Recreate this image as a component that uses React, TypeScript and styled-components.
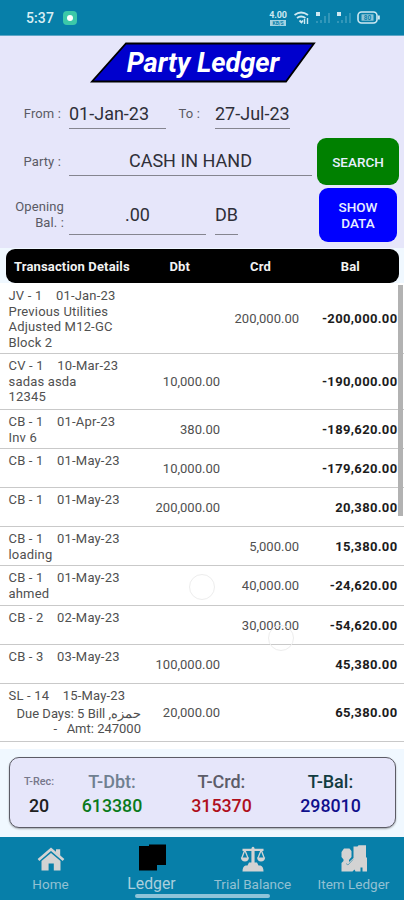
import React from "react";
import styled, { createGlobalStyle } from "styled-components";

const Global = createGlobalStyle`
  * { box-sizing: border-box; }
  body { margin: 0; font-family: Roboto, "Noto Sans", sans-serif; background: #e6e6fa; }
`;

const Screen = styled.div`
  width: 404px; height: 900px; display: flex; flex-direction: column;
  background: #f0f8ff; overflow: hidden;
`;

const StatusBar = styled.header`
  height: 36px; flex: none; background: #077fa9; color: #d9eef4;
  border-bottom: 1px solid #5ea6c6;
  display: flex; align-items: center; padding: 1px 24px 0 26px;
`;
const Clock = styled.span`font-size: 14px; font-weight: 500; letter-spacing: 0.1px; width: 37px;`;
const Recording = styled.span`
  width: 14px; height: 14px; border-radius: 4px; background: #3cc8a8;
  display: grid; place-items: center; margin-right: auto;
  &::after { content: ""; width: 6px; height: 6px; border-radius: 50%; background: #fff; }
`;
const Speed = styled.div`
  width: 20px; margin-right: 6px; display: flex; flex-direction: column; align-items: center;
  font-size: 9px; line-height: 9px; font-weight: 700; letter-spacing: -0.1px; color: #cfe9f2;
`;
const SpeedUnit = styled.span`
  width: 16px; height: 6px; font-size: 5px; line-height: 6px; text-align: center;
  color: #077fa9; background: #a5d3e2;
`;
const Gap = styled.span<{ $w: number }>`width: ${p => p.$w}px; flex: none;`;

const Form = styled.section`
  flex: none; height: 212px; background: #e6e6fa; display: flex; flex-direction: column;
`;
const Title = styled.h1`
  margin: 5px 0 0 89px; width: 228px; height: 43px; display: grid; flex: none;
  & > * { grid-area: 1 / 1; }
`;
const TitleText = styled.span`
  place-self: center; color: #fff; font-size: 27.3px; line-height: 30px; font-weight: 700;
  font-style: italic; letter-spacing: -0.05px; white-space: nowrap;
`;
const FormRow = styled.div<{ $h: number }>`
  display: flex; height: ${p => p.$h}px; flex: none; align-items: flex-end;
`;
const Label = styled.label<{ $w: number; $b: number; $r?: number }>`
  width: ${p => p.$w}px; padding-right: ${p => p.$r ?? 8}px; margin-bottom: ${p => p.$b}px;
  text-align: right; font-size: 13px; line-height: 16px; color: #5a5a64; flex: none; white-space: pre-line;
  letter-spacing: 0.12px;
`;
const Field = styled.div<{ $w: number; $pad: number; $center?: boolean; $b?: number }>`
  width: ${p => p.$w}px; flex: none; border-bottom: 1px solid #85858f; color: #2f2f38;
  padding-bottom: ${p => p.$pad}px; margin-bottom: ${p => p.$b ?? 0}px;
  text-align: ${p => (p.$center ? "center" : "left")};
  font-size: 18px; line-height: 20px; white-space: nowrap;
`;
const Action = styled.button<{ $w: number; $h: number; $color: string }>`
  width: ${p => p.$w}px; height: ${p => p.$h}px; background: ${p => p.$color};
  border: 0; border-radius: 9px; padding: 0 14px; color: #e8efff; flex: none; margin-left: auto;
  font: 500 13.5px/16px Roboto, sans-serif; letter-spacing: 0;
  display: flex; align-items: center; justify-content: center;
`;

const TableHead = styled.div`
  margin: 1px 5px 0 6px; height: 34px; flex: none; background: #000; color: #f2f2f2;
  border-radius: 9px; display: flex; align-items: center;
  font-size: 13px; font-weight: 700; letter-spacing: 0.15px; white-space: nowrap;
`;
const HeadCell = styled.span<{ $w: number; $left?: boolean }>`
  width: ${p => p.$w}px; text-align: ${p => (p.$left ? "left" : "center")};
  padding-left: ${p => (p.$left ? 8 : 0)}px;
`;

const List = styled.main`
  height: 466px; flex: none; background: #fff; position: relative; padding-top: 1px;
`;
const Row = styled.div<{ $h: number }>`
  height: ${p => p.$h}px; border-bottom: 1px solid #c9c9c9; display: flex;
  font-size: 13px; line-height: 15.7px; color: #505050;
`;
const Details = styled.div`
  width: 145px; padding: 4px 0 0 8.5px; white-space: pre; letter-spacing: 0.18px;
`;
const Note = styled.div<{ $indent?: boolean }>`
  ${p => p.$indent && "text-align: right; padding: 2px 4px 0 0; letter-spacing: 0;"}
`;
const Amount = styled.div<{ $w: number; $strong?: boolean }>`
  width: ${p => p.$w}px; text-align: right; align-self: center; padding-top: 1px;
  ${p => p.$strong && "font-weight: 700; color: #1c1c1c; letter-spacing: 0.35px;"}
`;
const Scrollbar = styled.div`
  position: absolute; right: 1px; top: 2px; width: 5px; height: 231px; background: #b2b2b2;
`;
const Touch = styled.i<{ $x: number; $y: number }>`
  position: absolute; left: ${p => p.$x}px; top: ${p => p.$y}px; width: 26px; height: 26px;
  border: 1px solid #ededed; border-radius: 50%;
`;

const Totals = styled.section`
  margin: 8px 8px 9px 9px; height: 71px; flex: none; background: #e6e6fa;
  border: 1.5px solid #5c5c66; border-radius: 10px; box-shadow: 0 1px 2px #0005;
  display: flex; padding-left: 1px;
`;
const Total = styled.div<{ $w: number }>`
  width: ${p => p.$w}px; display: flex; flex-direction: column; align-items: center; padding-top: 12px;
`;
const TotalLabel = styled.span<{ $c: string; $small?: boolean }>`
  color: ${p => p.$c}; font-weight: 500; font-size: ${p => (p.$small ? 10.8 : 18)}px; line-height: 24px;
`;
const TotalValue = styled.span<{ $c: string }>`
  color: ${p => p.$c}; font-weight: 500; font-size: 17.8px; line-height: 24px;
`;

const Nav = styled.nav`
  flex: 1; background: #077fa9; display: flex; position: relative;
`;
const Tab = styled.a<{ $active?: boolean }>`
  width: 101px; display: flex; flex-direction: column; align-items: center; padding-top: 7px;
  font-size: ${p => (p.$active ? 15.8 : 13.5)}px; color: ${p => (p.$active ? "#aacfdd" : "#93c1d3")};
  white-space: nowrap; line-height: 18px;
  svg { display: block; flex: none; margin-bottom: 2px; }
`;
const HomeBar = styled.div`
  position: absolute; left: 135px; top: 57px; width: 135px; height: 4px; border-radius: 2px; background: #8fc4d9;
`;

const icons = {
  home: (
    <svg width="28" height="29" viewBox="0 0 28 29" fill="#d3d3d3">
      <path d="M1.5 16 L14 5.3 L26.5 16" fill="none" stroke="#d3d3d3" strokeWidth="2.6" />
      <path d="M19 5.2 H23.2 V12 L19 8.5Z" />
      <path d="M4.5 17 L14 9 L23.5 17 V26.5 H16.8 V19.5 H11.6 V26.5 H4.5Z" />
    </svg>
  ),
  ledger: (
    <svg width="28" height="29" viewBox="0 0 28 29" fill="#000">
      <path d="M1 2 H11 V0.5 H28 V21 H19 V26.5 H1Z" />
    </svg>
  ),
  balance: (
    <svg width="26" height="29" viewBox="0 0 26 29" fill="#d3d3d3">
      <path d="M11.5 4 Q13 1.5 14.5 4 V4.8 H23.5 V7 H14.6 V19 H11.4 V7 H2.5 V4.8 H11.5Z" />
      <path d="M4.8 6 L8 14 M4.8 6 L1.8 14 M21.2 6 L24.2 14 M21.2 6 L18 14" stroke="#d3d3d3" strokeWidth="1.3" fill="none" />
      <path d="M0.8 13.5 H9 Q8.5 17.5 5 17.5 Q1.3 17.5 0.8 13.5Z M17 13.5 H25.2 Q24.7 17.5 21 17.5 Q17.5 17.5 17 13.5Z" />
      <path d="M9 18.5 H17 L18.5 21.5 H20.5 Q23.5 22.5 23.5 27.5 H2.5 Q2.5 22.5 5.5 21.5 H7.5Z" />
    </svg>
  ),
  item: (
    <svg width="28" height="29" viewBox="0 0 28 29" fill="#d3d3d3">
      <path d="M1.5 13 V8 L4 4.5 H9.5 L11.5 7 V13 L9 16 V18 L13.5 14 V2.5 H17.5 L18.5 1.2 H26 V13 L27 14 V27.5 H22.5 V23.5 H20.5 V27.5 H15.5 L14.5 25.5 L12.5 27.5 H1.5 V19 L3.5 17 V15.5Z" />
      <path d="M6 19.5 L8 21 L13 15.5" stroke="#6ba5b9" fill="none" />
    </svg>
  ),
};

type Entry = { h: number; ref: string; note?: string; indent?: boolean; dbt?: string; crd?: string; bal: string };
const entries: Entry[] = [
  { h: 70, ref: "JV - 1    01-Jan-23", note: "Previous Utilities\nAdjusted M12-GC\nBlock 2", crd: "200,000.00", bal: "-200,000.00" },
  { h: 56, ref: "CV - 1    10-Mar-23", note: "sadas asda\n12345", dbt: "10,000.00", bal: "-190,000.00" },
  { h: 39, ref: "CB - 1    01-Apr-23", note: "Inv 6", dbt: "380.00", bal: "-189,620.00" },
  { h: 39, ref: "CB - 1    01-May-23", dbt: "10,000.00", bal: "-179,620.00" },
  { h: 39, ref: "CB - 1    01-May-23", dbt: "200,000.00", bal: "20,380.00" },
  { h: 39, ref: "CB - 1    01-May-23", note: "loading", crd: "5,000.00", bal: "15,380.00" },
  { h: 40, ref: "CB - 1    01-May-23", note: "ahmed", crd: "40,000.00", bal: "-24,620.00" },
  { h: 39, ref: "CB - 2    02-May-23", crd: "30,000.00", bal: "-54,620.00" },
  { h: 39, ref: "CB - 3    03-May-23", dbt: "100,000.00", bal: "45,380.00" },
  { h: 58, ref: "SL - 14    15-May-23", note: "Due Days: 5 Bill ,حمزه\n-   Amt: 247000", indent: true, dbt: "20,000.00", bal: "65,380.00" },
];

const Signal = () => (
  <svg width="16" height="14" viewBox="0 0 16 14">
    <rect x="1" y="1" width="4" height="4" fill="#cfe9f2" />
    <path d="M2 10V12 M6 9V12 M10 5V12 M14 2V12" stroke="#3e9dbd" strokeWidth="1.6" />
  </svg>
);

export default function App() {
  return (
    <Screen>
      <Global />
      <StatusBar>
        <Clock>5:37</Clock>
        <Recording />
        <Speed>4.00<SpeedUnit>KB/S</SpeedUnit></Speed>
        <svg width="21" height="14" viewBox="0 0 21 14" fill="none" stroke="#cfe9f2" strokeWidth="1.8">
          <path d="M0.5 4 Q7 -1 14 4 M3 7 Q7 4 11.5 7 M5.5 9.5 L7.5 11.5 L9 9.5" />
          <path d="M10.5 8V13 M13.5 7V13" strokeWidth="1.4" />
        </svg>
        <Signal />
        <Gap $w={5} />
        <Signal />
        <Gap $w={5} />
        <svg width="23" height="14" viewBox="0 0 23 14">
          <rect x="1" y="1" width="19" height="11" rx="3.5" fill="none" stroke="#cfe9f2" strokeWidth="1.6" />
          <rect x="4.5" y="3.3" width="12" height="6.4" fill="#8fc5d8" />
          <rect x="21" y="4.5" width="1.8" height="4" fill="#cfe9f2" />
          <text x="10.5" y="9" fontSize="6.5" fontWeight="700" textAnchor="middle" fill="#077fa9">80</text>
        </svg>
      </StatusBar>

      <Form>
        <Title>
          <svg width="228" height="43" viewBox="0 0 228 43">
            <path d="M37 2.5 H225 L197 40.5 H3Z" fill="#0000cd" stroke="#000" strokeWidth="1.8" />
          </svg>
          <TitleText>Party Ledger</TitleText>
        </Title>
        <FormRow $h={45}>
          <Label $w={69} $b={7}>From :</Label>
          <Field $w={97} $pad={4}>01-Jan-23</Field>
          <Label $w={49} $b={7} $r={15}>To :</Label>
          <Field $w={75} $pad={4}>27-Jul-23</Field>
        </FormRow>
        <FormRow $h={56}>
          <Label $w={69} $b={15}>Party :</Label>
          <Field $w={243} $pad={4} $b={9} $center>CASH IN HAND</Field>
          <Action $w={82} $h={47} $color="#008000">SEARCH</Action>
          <Gap $w={5} />
        </FormRow>
        <FormRow $h={57}>
          <Label $w={69} $b={11} $r={5}>{"Opening\nBal. :"}</Label>
          <Field $w={137} $pad={9} $b={7} $center>.00</Field>
          <Gap $w={9} />
          <Field $w={23} $pad={9} $b={7}>DB</Field>
          <Action $w={78} $h={54} $color="#0000ff">SHOW DATA</Action>
          <Gap $w={7} />
        </FormRow>
      </Form>

      <TableHead>
        <HeadCell $w={135} $left>Transaction Details</HeadCell>
        <HeadCell $w={80}>Dbt</HeadCell>
        <HeadCell $w={83}>Crd</HeadCell>
        <HeadCell $w={98}>Bal</HeadCell>
      </TableHead>

      <List>
        {entries.map((e, i) => (
          <Row key={i} $h={e.h}>
            <Details>
              {e.ref}
              <Note $indent={e.indent}>{e.note}</Note>
            </Details>
            <Amount $w={75}>{e.dbt}</Amount>
            <Amount $w={79}>{e.crd}</Amount>
            <Amount $w={98.5} $strong>{e.bal}</Amount>
          </Row>
        ))}
        <Scrollbar />
        <Touch $x={189} $y={291} />
        <Touch $x={268} $y={342} />
      </List>

      <Totals>
        <Total $w={56}><TotalLabel $c="#77778a" $small>T-Rec:</TotalLabel><TotalValue $c="#202020">20</TotalValue></Total>
        <Total $w={90}><TotalLabel $c="#708090">T-Dbt:</TotalLabel><TotalValue $c="#0a7a1c">613380</TotalValue></Total>
        <Total $w={129}><TotalLabel $c="#5c5c68">T-Crd:</TotalLabel><TotalValue $c="#b00f1c">315370</TotalValue></Total>
        <Total $w={89}><TotalLabel $c="#123c40">T-Bal:</TotalLabel><TotalValue $c="#10108c">298010</TotalValue></Total>
      </Totals>

      <Nav>
        <Tab>{icons.home}Home</Tab>
        <Tab $active>{icons.ledger}Ledger</Tab>
        <Tab>{icons.balance}Trial Balance</Tab>
        <Tab>{icons.item}Item Ledger</Tab>
        <HomeBar />
      </Nav>
    </Screen>
  );
}
